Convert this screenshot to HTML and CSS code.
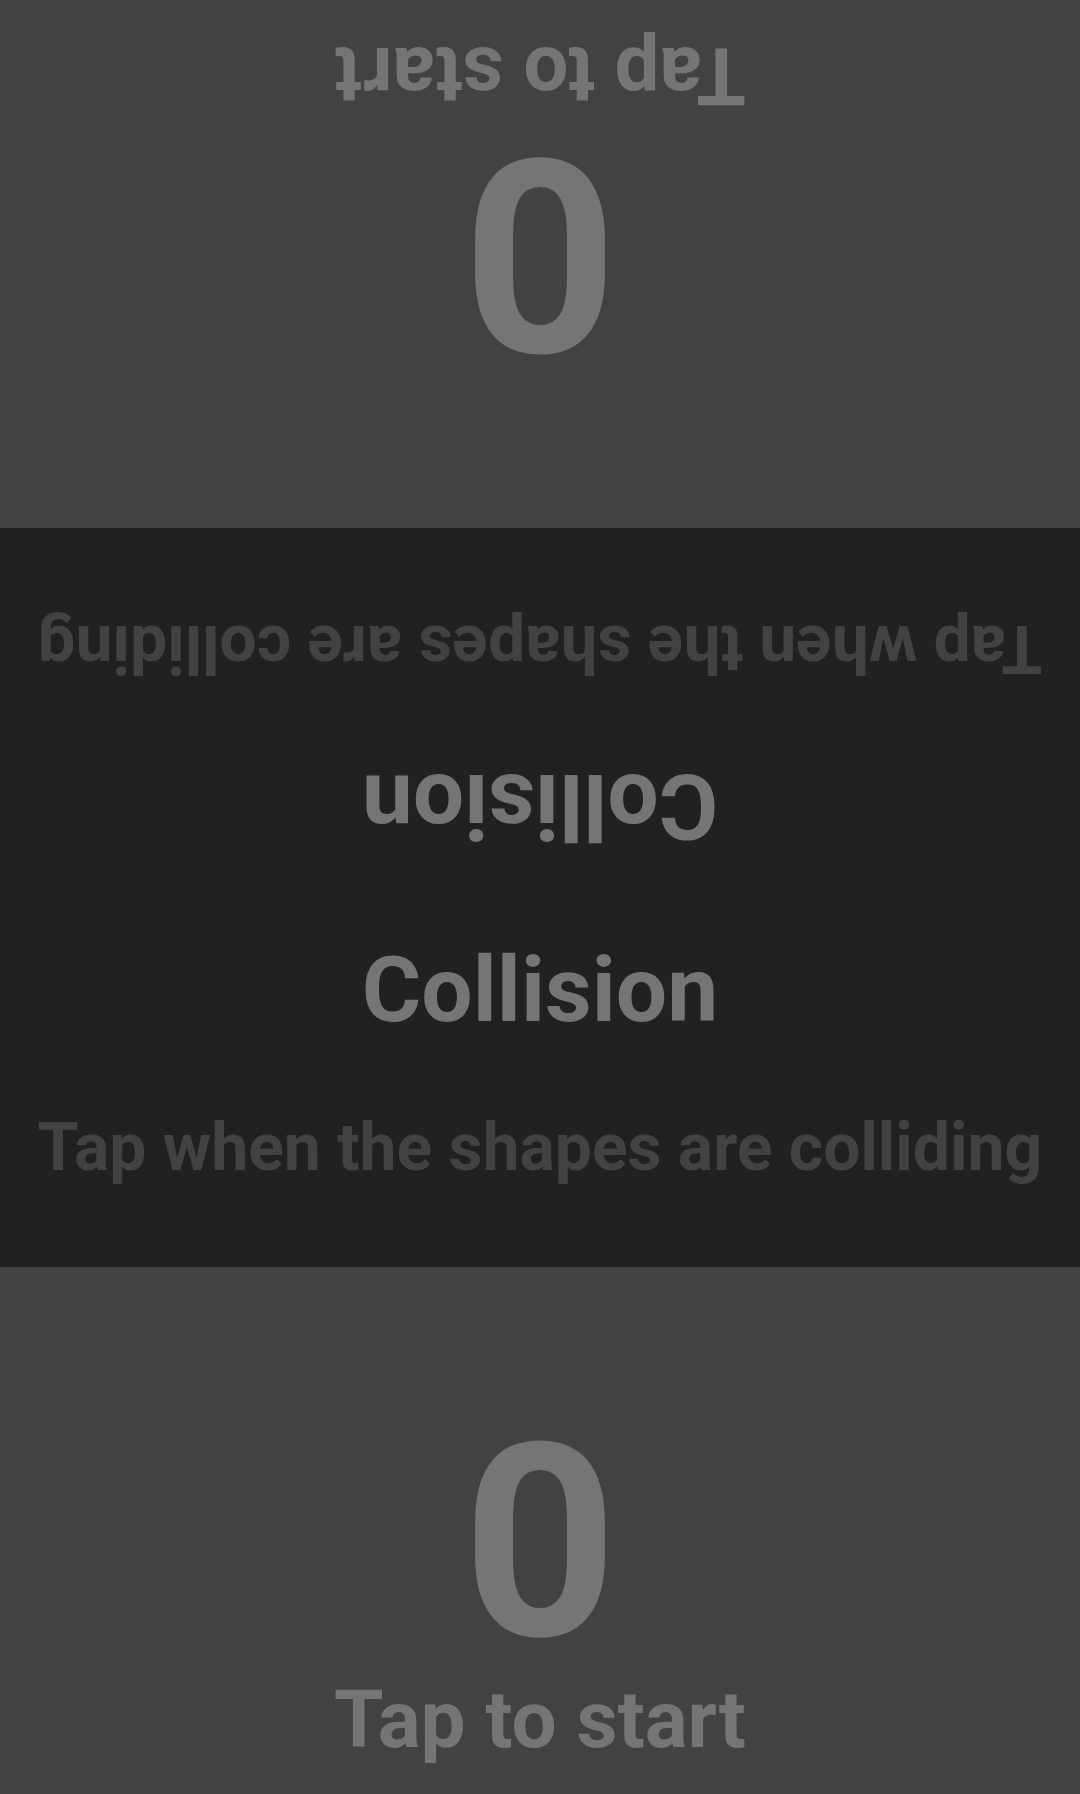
FILE: index.html
```html
<!DOCTYPE html>
<html lang="en">
<head>
<meta charset="utf-8">
<title>Collision</title>
<link rel="stylesheet" href="styles.css">
</head>
<body>
<div class="app">
  <section class="player player-top">
    <div class="score">0</div>
    <div class="hint">Tap to start</div>
  </section>
  <section class="board">
    <div class="half half-top">
      <div class="title">Collision</div>
      <div class="subtitle">Tap when the shapes are colliding</div>
    </div>
    <div class="half">
      <div class="title">Collision</div>
      <div class="subtitle">Tap when the shapes are colliding</div>
    </div>
  </section>
  <section class="player">
    <div class="score">0</div>
    <div class="hint">Tap to start</div>
  </section>
</div>
</body>
</html>
```

FILE: styles.css
```css
html, body {
  margin: 0;
  padding: 0;
  background: #424242;
}

.app {
  width: 1080px;
  height: 1794px;
  display: flex;
  flex-direction: column;
  font-family: Roboto, "Noto Sans", sans-serif;
  font-weight: 700;
  overflow: hidden;
}

.player {
  height: 527px;
  background: #424242;
  color: #757575;
  display: flex;
  flex-direction: column;
  align-items: center;
  padding-top: 141px;
  box-sizing: border-box;
}

.player-top {
  height: 528px;
  transform: rotate(180deg);
}

.score {
  font-size: 270px;
  line-height: 270px;
}

.hint {
  font-size: 80px;
  line-height: 80px;
  margin-top: 2px;
}

.board {
  height: 739px;
  background: #212121;
  display: flex;
  flex-direction: column;
}

.half {
  flex: 1;
  display: flex;
  flex-direction: column;
  align-items: center;
  padding-top: 47px;
  box-sizing: border-box;
}

.half-top {
  transform: rotate(180deg);
}

.title {
  font-size: 91px;
  line-height: 91px;
  color: #757575;
}

.subtitle {
  font-size: 66px;
  line-height: 66px;
  margin-top: 79px;
  color: #424242;
  white-space: nowrap;
}
```
